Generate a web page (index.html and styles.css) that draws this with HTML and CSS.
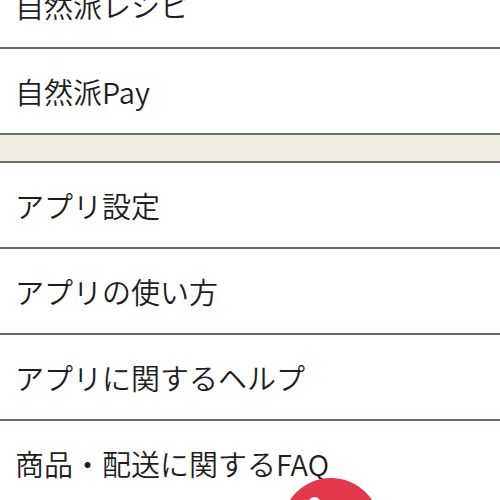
FILE: index.html
```html
<!DOCTYPE html>
<html lang="ja">
<head>
    <meta charset="UTF-8">
    <meta name="viewport" content="width=device-width, initial-scale=1.0">
    <title>メニュー</title>
    <link rel="stylesheet" href="styles.css">
</head>
<body>
    <div class="menu">
        <ul class="menu-group">
            <li class="menu-item">自然派レシピ</li>
            <li class="menu-item">自然派Pay</li>
        </ul>
        <div class="menu-divider"></div>
        <ul class="menu-group">
            <li class="menu-item">アプリ設定</li>
            <li class="menu-item">アプリの使い方</li>
            <li class="menu-item">アプリに関するヘルプ</li>
            <li class="menu-item">商品・配送に関するFAQ</li>
        </ul>
    </div>

    <button class="chat-button" aria-label="チャット">
        <svg width="98" height="98" viewBox="0 0 98 98">
            <circle cx="49" cy="49" r="49" fill="#e4384c"/>
            <ellipse cx="32.5" cy="30" rx="8" ry="11" fill="#ffffff"/>
        </svg>
    </button>
</body>
</html>
```

FILE: styles.css
```css
body {
    margin: 0;
    padding: 0;
    background: #ffffff;
    font-family: "Noto Sans CJK JP", "Noto Sans", sans-serif;
    color: #1e1e1e;
    overflow: hidden;
}
.menu {
    margin-top: -37px;
}
.menu-group {
    list-style: none;
    margin: 0;
    padding: 0;
}
.menu-item {
    height: 84px;
    display: flex;
    align-items: center;
    padding-left: 15px;
    font-size: 29px;
    font-weight: 350;
    border-bottom: 2px solid #6f685e;
    white-space: nowrap;
}
.menu-divider {
    height: 26px;
    background: #f1eee6;
    border-bottom: 2px solid #6f685e;
}
.chat-button {
    position: fixed;
    left: 282px;
    top: 478px;
    width: 98px;
    height: 98px;
    padding: 0;
    border: none;
    background: none;
    cursor: pointer;
}
.chat-button svg {
    display: block;
}
```
